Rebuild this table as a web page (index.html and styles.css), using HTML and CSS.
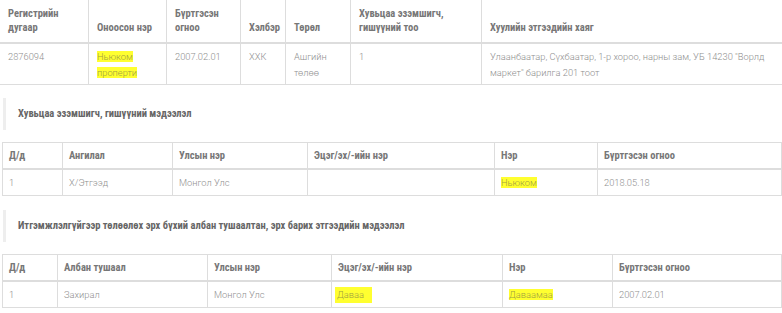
FILE: index.html
```html
<!DOCTYPE html>
<html lang="mn">
<head>
<meta charset="utf-8">
<link rel="stylesheet" href="styles.css">
</head>
<body>
<table class="grid t1">
  <colgroup><col style="width:89px"><col style="width:78px"><col style="width:74px"><col style="width:45px"><col style="width:65px"><col style="width:131px"><col></colgroup>
  <thead>
    <tr><th>Регистрийн дугаар</th><th>Оноосон нэр</th><th>Бүртгэсэн огноо</th><th>Хэлбэр</th><th>Төрөл</th><th>Хувьцаа эзэмшигч, гишүүний тоо</th><th>Хуулийн этгээдийн хаяг</th></tr>
  </thead>
  <tbody>
    <tr><td>2876094</td><td><span class="hl">Ньюком</span><br><span class="hl">пропeрти</span></td><td>2007.02.01</td><td>ХХК</td><td>Ашгийн төлөө</td><td>1</td><td>Улаанбаатар, Сүхбаатар, 1-р хороо, нарны зам, УБ 14230 "Ворлд маркет" барилга 201 тоот</td></tr>
  </tbody>
</table>

<h4 class="section">Хувьцаа эзэмшигч, гишүүний мэдээлэл</h4>

<table class="grid t2">
  <colgroup><col style="width:60px"><col style="width:110px"><col style="width:135px"><col style="width:187px"><col style="width:103px"><col></colgroup>
  <thead>
    <tr><th>Д/д</th><th>Ангилал</th><th>Улсын нэр</th><th>Эцэг/эх/-ийн нэр</th><th>Нэр</th><th>Бүртгэсэн огноо</th></tr>
  </thead>
  <tbody>
    <tr><td>1</td><td>Х/Этгээд</td><td>Монгол Улс</td><td></td><td><span class="hl">Ньюком</span></td><td>2018.05.18</td></tr>
  </tbody>
</table>

<h4 class="section">Итгэмжлэлгүйгээр төлөөлөх эрх бүхий албан тушаалтан, эрх барих этгээдийн мэдээлэл</h4>

<table class="grid t3">
  <colgroup><col style="width:55px"><col style="width:150px"><col style="width:124px"><col style="width:171px"><col style="width:110px"><col></colgroup>
  <thead>
    <tr><th>Д/д</th><th>Албан тушаал</th><th>Улсын нэр</th><th>Эцэг/эх/-ийн нэр</th><th>Нэр</th><th>Бүртгэсэн огноо</th></tr>
  </thead>
  <tbody>
    <tr><td>1</td><td>Захирал</td><td>Монгол Улс</td><td><span class="hl mark">Даваа</span></td><td><span class="hl">Даваамаа</span></td><td>2007.02.01</td></tr>
  </tbody>
</table>
</body>
</html>
```

FILE: styles.css
```css
html, body {
  margin: 0;
  padding: 0;
  background: #fff;
}

body {
  font-family: Roboto, "Liberation Sans", sans-serif;
  font-weight: 300;
  font-size: 9.3px;
  color: #8f8f8f;
  overflow: hidden;
}

.grid {
  border-collapse: collapse;
  table-layout: fixed;
}

.grid th,
.grid td {
  border: 1px solid #ddd;
  text-align: left;
  vertical-align: top;
}

.grid th {
  font-family: "Roboto", "DejaVu Sans Condensed", sans-serif;
  font-stretch: 75%;
  font-weight: 700;
  font-size: 10.5px;
  color: #777;
  vertical-align: bottom;
  border-bottom: 2px solid #ddd;
}

.t1 {
  width: 800px;
  margin: -1px 0 0 -1px;
}

.t1 th {
  padding: 7px 7px 7px 8px;
  line-height: 14px;
  height: 28px;
}

.t1 td {
  padding: 5px 7px 3px 8px;
  line-height: 16px;
  height: 32px;
}

.t2, .t3 {
  width: 780px;
  margin-left: 2px;
}

.t2 th, .t3 th {
  padding: 5px 5px 5px 6px;
  line-height: 15px;
}

.t2 td, .t3 td {
  padding: 5px 5px 5px 6px;
  line-height: 15px;
}

.section {
  margin: 13px 0 12px 3px;
  padding: 0 0 0 12px;
  border-left: 3px solid #eee;
  height: 32px;
  line-height: 32px;
  font-family: "Roboto", "DejaVu Sans Condensed", sans-serif;
  font-stretch: 75%;
  font-weight: 700;
  font-size: 10.5px;
  color: #666;
}

.t2 + .section {
  margin-top: 14px;
}

.hl {
  background: #ffff30;
  color: #a0a040;
}

.mark {
  padding: 2px 8px 3px 2px;
  margin-left: -3px;
}
```
